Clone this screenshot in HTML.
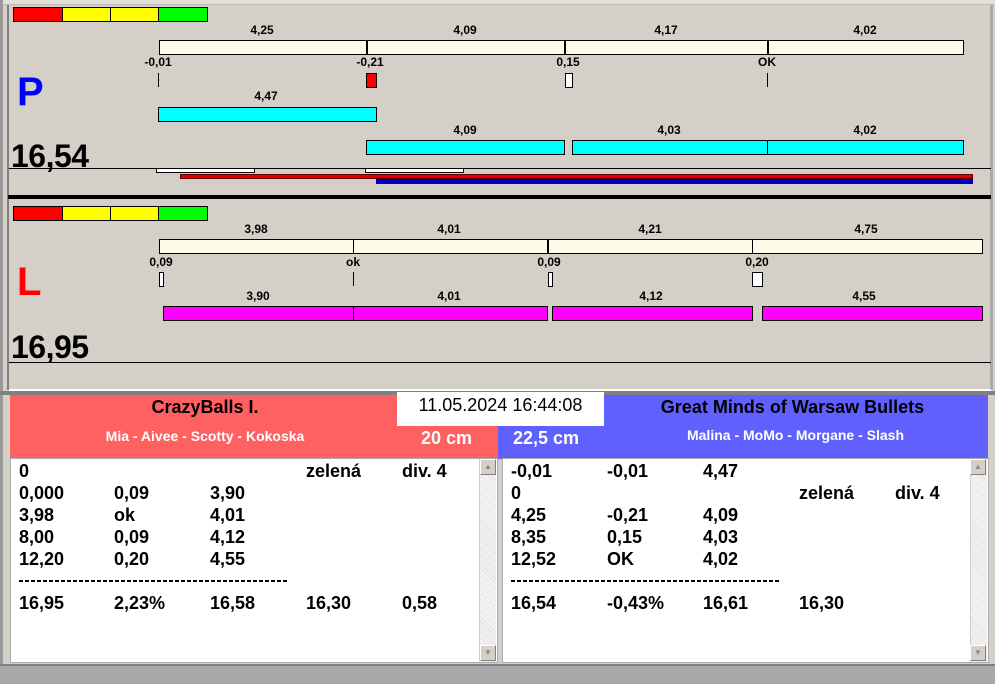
<!DOCTYPE html>
<html><head><meta charset="utf-8"><style>
*{margin:0;padding:0;box-sizing:border-box}
body{width:995px;height:684px;background:#d4d0c8;position:relative;overflow:hidden;font-family:"Liberation Sans",Arial,sans-serif}
div{position:absolute}
.l{font-size:12px;font-weight:bold;color:#000;transform:translateX(-50%);white-space:nowrap;line-height:14px}
.cr{background:#fffbe8;border:1px solid #000}
.cy{background:#00ffff;border:1px solid #000}
.mg{background:#ff00ff;border:1px solid #000}
.vl{width:1px;background:#000}
.wb{background:#fff;border:1px solid #000}
.t{font-size:18px;font-weight:bold;line-height:22px;white-space:pre}
.sb{background:#e8e8e8 repeating-linear-gradient(45deg,#ddd 0 1px,#fff 1px 2px);border-left:1px solid #ccc}
.ar{width:16px;height:16px;background:#d4d0c8;border:1px solid;border-color:#fff #808080 #808080 #fff;font-size:8px;color:#888;text-align:center;line-height:14px}
.big{font-size:32px;font-weight:bold;line-height:36px;letter-spacing:-0.5px}
.dash{height:2px;background:repeating-linear-gradient(90deg,#000 0 4px,transparent 4px 6px)}
</style></head><body>
<div style="left:0;top:0;width:995px;height:5px;background:#e4e0d8;border-bottom:1px solid #bbb"></div>
<div style="left:0;top:0;width:3px;height:684px;background:#999"></div>
<div style="left:7px;top:5px;width:2px;height:385px;background:#808080"></div>
<div style="left:990px;top:5px;width:3px;height:385px;background:#aaa"></div>
<div style="left:13px;top:7px;width:195px;height:15px;border:1px solid #000;background:linear-gradient(90deg,#f00 0 48px,#000 48px 49px,#ff0 49px 96px,#000 96px 97px,#ff0 97px 144px,#000 144px 145px,#0f0 145px)"></div>
<div class="l" style="left:262px;top:23px">4,25</div><div class="l" style="left:465px;top:23px">4,09</div><div class="l" style="left:666px;top:23px">4,17</div><div class="l" style="left:865px;top:23px">4,02</div>
<div class="cr" style="left:159px;top:40px;width:805px;height:15px"></div>
<div class="vl" style="left:366px;top:40px;height:15px;width:2px"></div><div class="vl" style="left:564px;top:40px;height:15px;width:2px"></div><div class="vl" style="left:767px;top:40px;height:15px;width:2px"></div>
<div class="l" style="left:158px;top:55px">-0,01</div><div class="l" style="left:370px;top:55px">-0,21</div><div class="l" style="left:568px;top:55px">0,15</div><div class="l" style="left:767px;top:55px">OK</div>
<div class="vl" style="left:158px;top:73px;height:14px"></div>
<div style="left:366px;top:73px;width:11px;height:15px;background:#f00;border:1px solid #000"></div>
<div class="wb" style="left:565px;top:73px;width:8px;height:15px"></div>
<div class="vl" style="left:767px;top:73px;height:14px"></div>
<div style="left:17px;top:70px;font-size:40px;font-weight:bold;color:#0000ff">P</div>
<div class="l" style="left:266px;top:89px">4,47</div>
<div class="cy" style="left:158px;top:107px;width:219px;height:15px"></div>
<div class="l" style="left:465px;top:123px">4,09</div><div class="l" style="left:669px;top:123px">4,03</div><div class="l" style="left:865px;top:123px">4,02</div>
<div class="cy" style="left:366px;top:140px;width:199px;height:15px"></div>
<div class="cy" style="left:572px;top:140px;width:196px;height:15px"></div>
<div class="cy" style="left:767px;top:140px;width:197px;height:15px"></div>
<div class="big" style="left:11px;top:138px">16,54</div>
<div style="left:9px;top:168px;width:982px;height:1px;background:#000"></div>
<div class="wb" style="left:156px;top:168px;width:99px;height:5px"></div>
<div class="wb" style="left:365px;top:168px;width:99px;height:5px"></div>
<div style="left:180px;top:174px;width:793px;height:5px;background:#e00000;border:1px solid #600"></div>
<div style="left:376px;top:179px;width:597px;height:5px;background:#0000c0"></div>
<div style="left:8px;top:195px;width:983px;height:4px;background:#000"></div>
<div style="left:13px;top:206px;width:195px;height:15px;border:1px solid #000;background:linear-gradient(90deg,#f00 0 48px,#000 48px 49px,#ff0 49px 96px,#000 96px 97px,#ff0 97px 144px,#000 144px 145px,#0f0 145px)"></div>
<div class="l" style="left:256px;top:222px">3,98</div><div class="l" style="left:449px;top:222px">4,01</div><div class="l" style="left:650px;top:222px">4,21</div><div class="l" style="left:866px;top:222px">4,75</div>
<div class="cr" style="left:159px;top:239px;width:824px;height:15px"></div>
<div class="vl" style="left:353px;top:239px;height:15px"></div><div class="vl" style="left:547px;top:239px;height:15px;width:2px"></div><div class="vl" style="left:752px;top:239px;height:15px"></div>
<div class="l" style="left:161px;top:255px">0,09</div><div class="l" style="left:353px;top:255px">ok</div><div class="l" style="left:549px;top:255px">0,09</div><div class="l" style="left:757px;top:255px">0,20</div>
<div class="wb" style="left:159px;top:272px;width:5px;height:15px"></div>
<div class="vl" style="left:353px;top:272px;height:14px"></div>
<div class="wb" style="left:548px;top:272px;width:5px;height:15px"></div>
<div class="wb" style="left:752px;top:272px;width:11px;height:15px"></div>
<div style="left:17px;top:260px;font-size:40px;font-weight:bold;color:#f00">L</div>
<div class="l" style="left:258px;top:289px">3,90</div><div class="l" style="left:449px;top:289px">4,01</div><div class="l" style="left:651px;top:289px">4,12</div><div class="l" style="left:864px;top:289px">4,55</div>
<div class="mg" style="left:163px;top:306px;width:385px;height:15px"></div>
<div class="vl" style="left:353px;top:306px;height:15px"></div>
<div class="mg" style="left:552px;top:306px;width:201px;height:15px"></div>
<div class="mg" style="left:762px;top:306px;width:221px;height:15px"></div>
<div class="big" style="left:11px;top:329px">16,95</div>
<div style="left:9px;top:362px;width:982px;height:1px;background:#000"></div>
<div style="left:9px;top:389px;width:982px;height:2px;background:#fff"></div>
<div style="left:0;top:391px;width:995px;height:4px;background:#808080"></div>
<div style="left:10px;top:395px;width:489px;height:64px;background:#ff6060"></div>
<div style="left:498px;top:395px;width:490px;height:64px;background:#6060ff"></div>
<div style="left:10px;top:397px;width:390px;text-align:center;font-size:18px;font-weight:bold">CrazyBalls I.</div>
<div style="left:10px;top:428px;width:390px;text-align:center;font-size:14px;font-weight:bold;color:#fff">Mia - Aivee - Scotty - Kokoska</div>
<div style="left:421px;top:428px;font-size:18px;font-weight:bold;color:#fff">20 cm</div>
<div style="left:397px;top:392px;width:207px;height:34px;background:#fff;font-size:18px;text-align:center;line-height:26px">11.05.2024 16:44:08</div>
<div style="left:604px;top:397px;width:377px;text-align:center;font-size:18px;font-weight:bold">Great Minds of Warsaw Bullets</div>
<div style="left:603px;top:427px;width:385px;text-align:center;font-size:14px;font-weight:bold;color:#fff">Malina - MoMo - Morgane - Slash</div>
<div style="left:513px;top:428px;font-size:18px;font-weight:bold;color:#fff">22,5 cm</div>
<div style="left:10px;top:458px;width:488px;height:205px;background:#fff;border:1px solid #aaa"></div>
<div class="sb" style="left:479px;top:459px;width:17px;height:203px"></div>
<div class="ar" style="left:480px;top:459px">▲</div><div class="ar" style="left:480px;top:645px">▼</div>
<div style="left:502px;top:458px;width:487px;height:205px;background:#fff;border:1px solid #aaa"></div>
<div class="sb" style="left:970px;top:459px;width:17px;height:203px"></div>
<div class="ar" style="left:970px;top:459px">▲</div><div class="ar" style="left:970px;top:645px">▼</div>
<div class="t" style="left:19px;top:460px">0</div><div class="t" style="left:306px;top:460px">zelená</div><div class="t" style="left:402px;top:460px">div. 4</div>
<div class="t" style="left:19px;top:482px">0,000</div><div class="t" style="left:114px;top:482px">0,09</div><div class="t" style="left:210px;top:482px">3,90</div>
<div class="t" style="left:19px;top:504px">3,98</div><div class="t" style="left:114px;top:504px">ok</div><div class="t" style="left:210px;top:504px">4,01</div>
<div class="t" style="left:19px;top:526px">8,00</div><div class="t" style="left:114px;top:526px">0,09</div><div class="t" style="left:210px;top:526px">4,12</div>
<div class="t" style="left:19px;top:548px">12,20</div><div class="t" style="left:114px;top:548px">0,20</div><div class="t" style="left:210px;top:548px">4,55</div>
<div class="dash" style="left:19px;top:580px;width:270px"></div>
<div class="t" style="left:19px;top:592px">16,95</div><div class="t" style="left:114px;top:592px">2,23%</div><div class="t" style="left:210px;top:592px">16,58</div><div class="t" style="left:306px;top:592px">16,30</div><div class="t" style="left:402px;top:592px">0,58</div>
<div class="t" style="left:511px;top:460px">-0,01</div><div class="t" style="left:607px;top:460px">-0,01</div><div class="t" style="left:703px;top:460px">4,47</div>
<div class="t" style="left:511px;top:482px">0</div><div class="t" style="left:799px;top:482px">zelená</div><div class="t" style="left:895px;top:482px">div. 4</div>
<div class="t" style="left:511px;top:504px">4,25</div><div class="t" style="left:607px;top:504px">-0,21</div><div class="t" style="left:703px;top:504px">4,09</div>
<div class="t" style="left:511px;top:526px">8,35</div><div class="t" style="left:607px;top:526px">0,15</div><div class="t" style="left:703px;top:526px">4,03</div>
<div class="t" style="left:511px;top:548px">12,52</div><div class="t" style="left:607px;top:548px">OK</div><div class="t" style="left:703px;top:548px">4,02</div>
<div class="dash" style="left:511px;top:580px;width:270px"></div>
<div class="t" style="left:511px;top:592px">16,54</div><div class="t" style="left:607px;top:592px">-0,43%</div><div class="t" style="left:703px;top:592px">16,61</div><div class="t" style="left:799px;top:592px">16,30</div>
<div style="left:0;top:664px;width:995px;height:20px;background:#a8a8a8;border-top:2px solid #808080"></div>
</body></html>
